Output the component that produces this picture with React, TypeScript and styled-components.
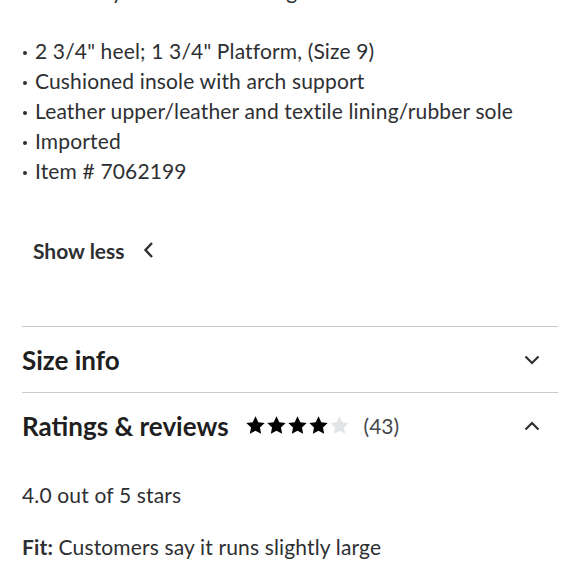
import React from "react";
import styled, { createGlobalStyle } from "styled-components";

const GlobalStyle = createGlobalStyle`
  html, body {
    margin: 0;
    padding: 0;
    background: #ffffff;
  }
  body {
    font-family: Lato, "Open Sans", sans-serif;
    color: #2e2f32;
    overflow: hidden;
  }
`;

const StyledPage = styled.div`
  width: 580px;
  height: 580px;
  overflow: hidden;
  padding: 0 22px;
  box-sizing: border-box;
`;

const StyledIntro = styled.p`
  margin: -24px 0 0 0;
  font-size: 21px;
  line-height: 30px;
  letter-spacing: 0.15px;
`;

const StyledList = styled.ul`
  list-style: none;
  margin: 30px 0 0 0;
  padding: 0;
`;

const StyledItem = styled.li`
  font-size: 21px;
  line-height: 30px;
  letter-spacing: 0.15px;
  display: flex;
  align-items: center;

  &::before {
    content: "";
    width: 4px;
    height: 4px;
    border-radius: 50%;
    background: #2e2f32;
    margin: 3px 8px 0 1px;
    flex-shrink: 0;
  }
`;

const StyledToggle = styled.button`
  display: flex;
  align-items: center;
  gap: 18px;
  margin: 49px 0 0 11px;
  padding: 0;
  border: none;
  background: none;
  font-family: Lato, sans-serif;
  font-size: 21px;
  font-weight: 700;
  color: #2e2f32;
  height: 30px;
`;

const StyledSection = styled.div<{ $first?: boolean }>`
  border-top: 1px solid #c9cacc;
  margin-top: ${(p) => (p.$first ? "61px" : "0")};
  height: 65px;
  display: flex;
  align-items: center;
  justify-content: space-between;
`;

const StyledSectionTitle = styled.div`
  display: flex;
  align-items: center;
  font-size: 26px;
  font-weight: 700;
  color: #1f1f21;
`;

const StyledStars = styled.span`
  display: inline-flex;
  margin-left: 16px;
`;

const StyledCount = styled.span`
  font-size: 21px;
  font-weight: 400;
  color: #46474a;
  margin-left: 14px;
`;

const StyledChevron = styled.svg`
  margin-right: 18px;
`;

const StyledBody = styled.div`
  padding-top: 22px;
`;

const StyledLine = styled.p`
  margin: 0 0 22px 0;
  font-size: 21px;
  line-height: 30px;
  letter-spacing: 0.15px;
`;

const Star = ({ filled }: { filled: boolean }) => (
  <svg width="21" height="21" viewBox="0 0 24 24">
    <path
      d="M12 1.5l3.2 6.7 7.3.9-5.4 5.1 1.4 7.3L12 17.9l-6.5 3.6 1.4-7.3-5.4-5.1 7.3-.9z"
      fill={filled ? "#000000" : "#e3e4e5"}
    />
  </svg>
);

const bullets = [
  "2 3/4\" heel; 1 3/4\" Platform, (Size 9)",
  "Cushioned insole with arch support",
  "Leather upper/leather and textile lining/rubber sole",
  "Imported",
  "Item # 7062199",
];

export default function App() {
  return (
    <>
      <GlobalStyle />
      <StyledPage>
        <StyledIntro>Beautifully made with a lining</StyledIntro>
        <StyledList>
          {bullets.map((b) => (
            <StyledItem key={b}>{b}</StyledItem>
          ))}
        </StyledList>
        <StyledToggle>
          Show less
          <svg width="12" height="18" viewBox="0 0 12 18">
            <path d="M9 2L2.5 9 9 16" fill="none" stroke="#2e2f32" strokeWidth="2.4" />
          </svg>
        </StyledToggle>
        <StyledSection $first>
          <StyledSectionTitle>Size info</StyledSectionTitle>
          <StyledChevron width="16" height="10" viewBox="0 0 16 10">
            <path d="M1.5 1.5L8 8l6.5-6.5" fill="none" stroke="#2e2f32" strokeWidth="2.2" />
          </StyledChevron>
        </StyledSection>
        <StyledSection>
          <StyledSectionTitle>
            Ratings &amp; reviews
            <StyledStars>
              {[1, 2, 3, 4, 5].map((n) => (
                <Star key={n} filled={n <= 4} />
              ))}
            </StyledStars>
            <StyledCount>(43)</StyledCount>
          </StyledSectionTitle>
          <StyledChevron width="16" height="10" viewBox="0 0 16 10">
            <path d="M1.5 8.5L8 2l6.5 6.5" fill="none" stroke="#2e2f32" strokeWidth="2.2" />
          </StyledChevron>
        </StyledSection>
        <StyledBody>
          <StyledLine>4.0 out of 5 stars</StyledLine>
          <StyledLine>
            <b>Fit:</b> Customers say it runs slightly large
          </StyledLine>
        </StyledBody>
      </StyledPage>
    </>
  );
}
